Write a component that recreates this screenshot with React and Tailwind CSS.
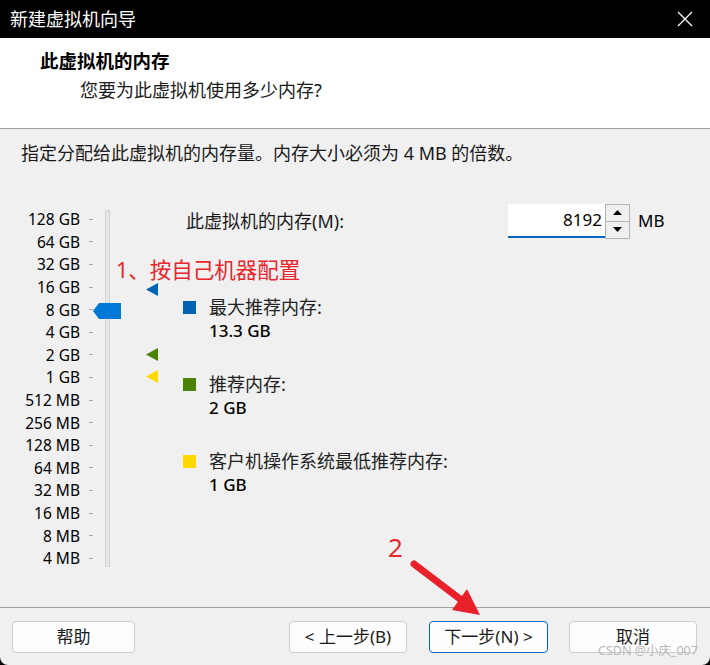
import React from "react";

const scale = [
  "128 GB", "64 GB", "32 GB", "16 GB", "8 GB", "4 GB", "2 GB", "1 GB",
  "512 MB", "256 MB", "128 MB", "64 MB", "32 MB", "16 MB", "8 MB", "4 MB",
];

const legend = [
  { color: "bg-[#0063b1]", label: "最大推荐内存:", value: "13.3 GB" },
  { color: "bg-[#498205]", label: "推荐内存:", value: "2 GB" },
  { color: "bg-[#ffd800]", label: "客户机操作系统最低推荐内存:", value: "1 GB" },
];

function Marker({ top, fill }) {
  return (
    <svg className="absolute left-[36px] h-[13px] w-[12px]" style={{ top }} viewBox="0 0 12 13">
      <polygon points="12,0 12,13 0,6.5" fill={fill} />
    </svg>
  );
}

function Button({ children, className }) {
  return (
    <div
      className={`flex h-[32px] items-center justify-center rounded-[4px] border bg-[#fdfdfd] text-[17px] text-[#1b1b1b] ${className}`}
    >
      {children}
    </div>
  );
}

export default function App() {
  return (
    <div
      className="relative h-[665px] w-[710px] overflow-hidden bg-black"
      style={{ fontFamily: '"Noto Sans", "Noto Sans CJK SC", sans-serif' }}
    >
      <div className="flex h-full flex-col overflow-hidden rounded-b-[8px] bg-[#f0f0f0]">
        {/* title bar */}
        <div className="flex h-[38px] shrink-0 items-center justify-between bg-black pl-[10px] pr-[17px]">
          <span className="text-[18px] leading-[22px] text-white">新建虚拟机向导</span>
          <svg className="h-[16px] w-[16px]" viewBox="0 0 16 16">
            <path d="M1 1L15 15M15 1L1 15" stroke="white" strokeWidth="1.3" />
          </svg>
        </div>

        {/* header */}
        <div className="h-[91px] shrink-0 border-b border-[#a0a0a0] bg-white pl-[40px] pt-[12px]">
          <div className="text-[18.5px] font-bold leading-[22px] text-black">此虚拟机的内存</div>
          <div className="ml-[40px] mt-[7px] text-[18px] leading-[22px] text-[#1a1a1a]">
            您要为此虚拟机使用多少内存?
          </div>
        </div>

        {/* body */}
        <div className="flex-1 pl-[21px] pt-[13px]">
          <p className="text-[18px] leading-[22px] text-[#1a1a1a]">
            指定分配给此虚拟机的内存量。内存大小必须为 4 MB 的倍数。
          </p>

          <div className="relative -ml-[21px] mt-[40px] flex">
            {/* scale labels + ticks */}
            <div className="flex flex-col pt-[4px]">
              {scale.map((s) => (
                <div key={s} className="flex h-[22.6px] items-center">
                  <span className="w-[80px] text-right text-[15.5px] leading-[22px] text-black">{s}</span>
                  <span className="ml-[9px] h-px w-[4px] bg-[#a8a8a8]" />
                </div>
              ))}
            </div>

            {/* track */}
            <div className="relative ml-[12px] mt-[6px] h-[357px] w-[5px] border border-[#d4d4d4] bg-[#e6e6e6]">
              <svg className="absolute left-[-13px] top-[92px] h-[16px] w-[28px]" viewBox="0 0 28 16">
                <polygon points="6,0 28,0 28,16 6,16 0,8" fill="#0078d7" />
              </svg>
            </div>

            {/* markers */}
            <div className="relative w-[73px]">
              <Marker top={79} fill="#0063b1" />
              <Marker top={144} fill="#498205" />
              <Marker top={166} fill="#ffd800" />
            </div>

            {/* right side */}
            <div className="flex flex-col">
              <div className="flex h-[34px] items-center">
                <span className="w-[325px] pl-[3px] text-[18px] leading-[22px] text-[#1a1a1a]">
                  此虚拟机的内存(M):
                </span>
                <div className="flex h-[34px] w-[97px] items-center justify-end border-b-2 border-[#0067c0] bg-white pr-[3px] text-[17px] text-black">
                  8192
                </div>
                <div className="flex h-[35px] w-[25px] flex-col border border-[#b4b4b4] bg-[#f0f0f0]">
                  <div className="flex flex-1 items-center justify-center border-b border-[#b4b4b4]">
                    <svg className="h-[5px] w-[9px]" viewBox="0 0 9 5">
                      <polygon points="0,5 9,5 4.5,0" fill="#000" />
                    </svg>
                  </div>
                  <div className="flex flex-1 items-center justify-center">
                    <svg className="h-[5px] w-[9px]" viewBox="0 0 9 5">
                      <polygon points="0,0 9,0 4.5,5" fill="#000" />
                    </svg>
                  </div>
                </div>
                <span className="ml-[8px] text-[17px] text-black">MB</span>
              </div>

              <div className="mt-[57px] flex flex-col gap-[29px]">
                {legend.map((l) => (
                  <div key={l.label} className="flex">
                    <span className={`mt-[5.5px] h-[13px] w-[13px] ${l.color}`} />
                    <div className="ml-[13px] flex flex-col">
                      <span className="text-[18px] leading-[24px] text-[#222]">{l.label}</span>
                      <span className="text-[17px] font-medium leading-[24px] text-black">{l.value}</span>
                    </div>
                  </div>
                ))}
              </div>
            </div>

            <span className="absolute left-[116px] top-[53px] text-[21.5px] leading-[26px] text-[#e8262c]">
              1、按自己机器配置
            </span>
          </div>
        </div>

        {/* footer */}
        <div className="flex h-[58px] shrink-0 items-start border-t border-[#a0a0a0] pt-[13px]">
          <Button className="ml-[12px] w-[123px] border-[#cccccc]">帮助</Button>
          <Button className="ml-[154px] w-[118px] border-[#cccccc]">&lt; 上一步(B)</Button>
          <Button className="ml-[22px] w-[119px] border-[#0067c0]">下一步(N) &gt;</Button>
          <Button className="ml-[21px] w-[128px] border-[#cccccc]">取消</Button>
        </div>
      </div>

      {/* annotations */}
      <span className="absolute left-[388px] top-[532px] text-[26px] leading-[30px] text-[#e8262c]">2</span>
      <svg className="absolute left-[400px] top-[550px] h-[80px] w-[90px]" viewBox="400 550 90 80">
        <line x1="414" y1="564" x2="464" y2="602" stroke="#e8202a" strokeWidth="7" strokeLinecap="round" />
        <polygon points="452,610 467,589 480,615" fill="#e8202a" />
      </svg>
      <span className="absolute left-[598px] top-[643px] text-[12.5px] leading-[16px] text-[#b8b8b8]">
        CSDN @小庆_007
      </span>
    </div>
  );
}
